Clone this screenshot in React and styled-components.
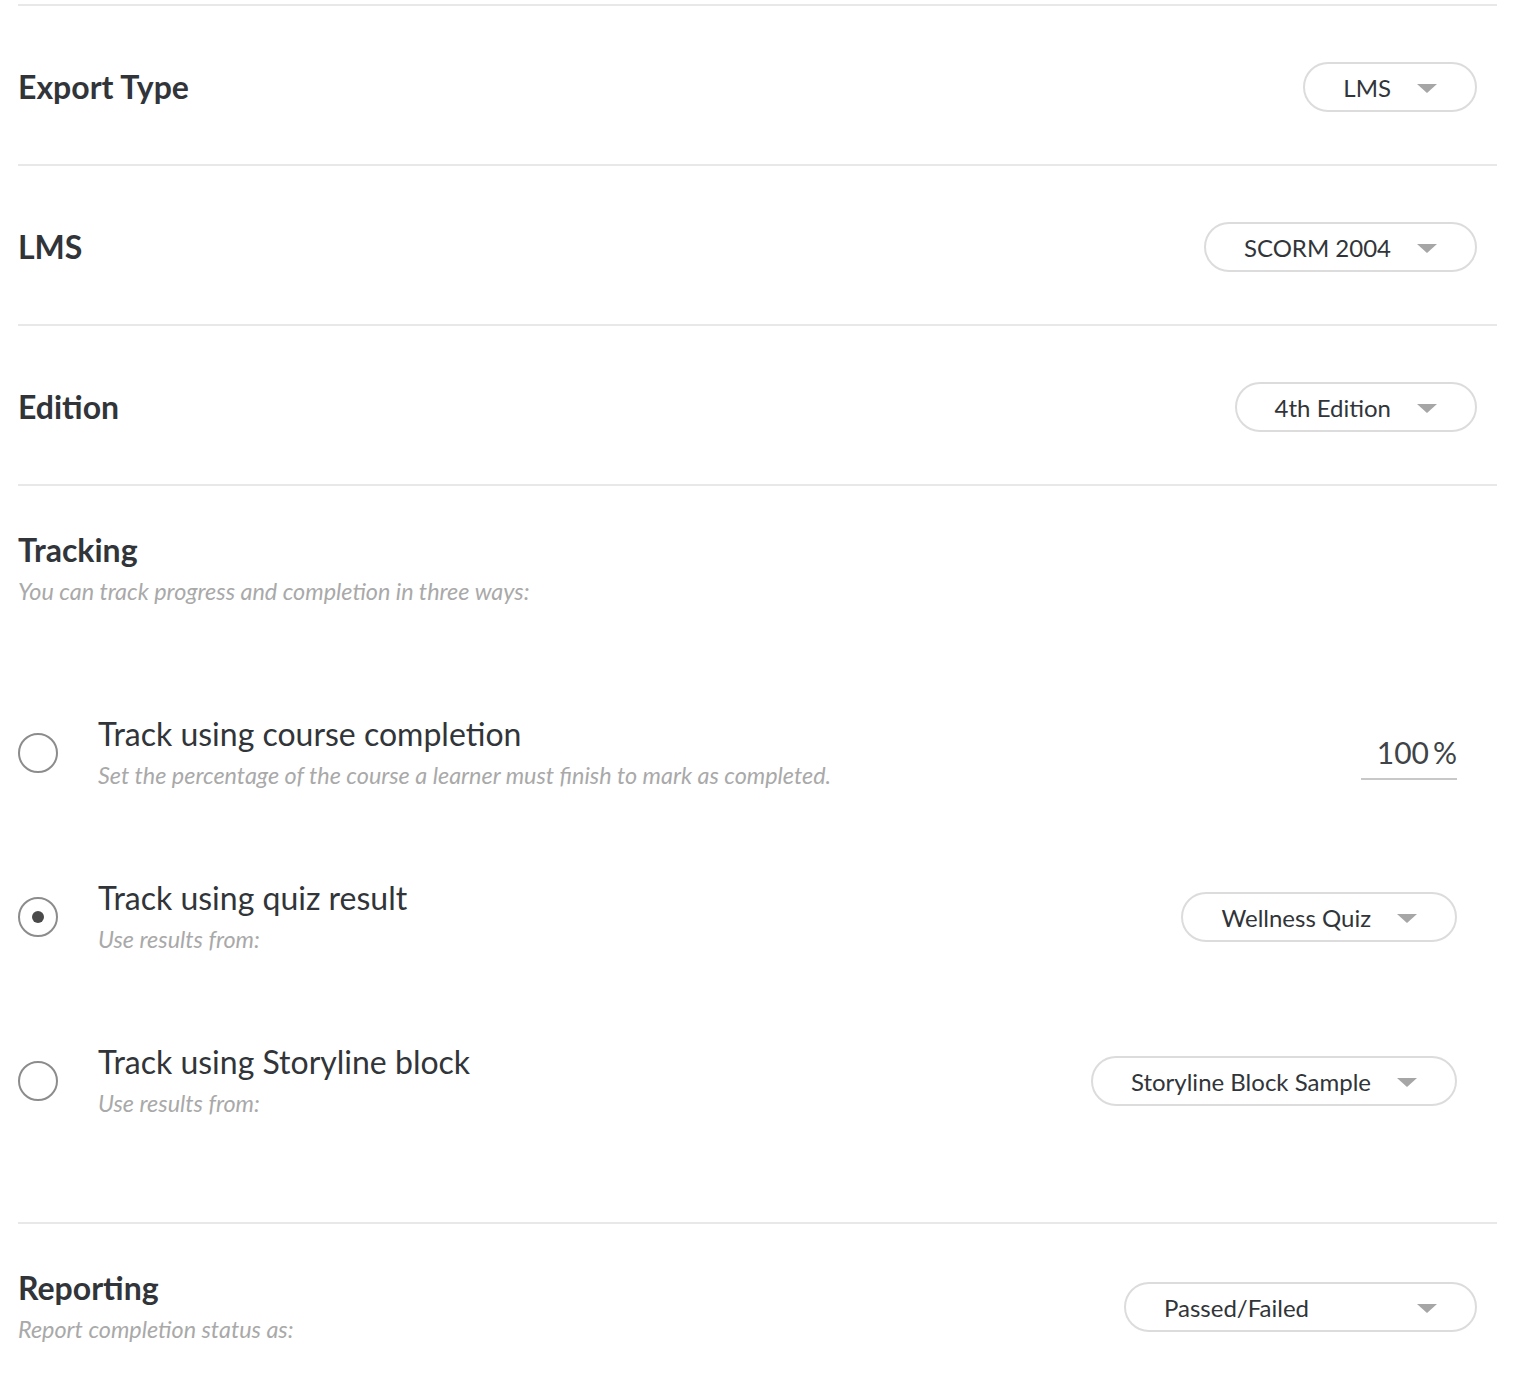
import React from "react";
import styled, { createGlobalStyle } from "styled-components";

const Global = createGlobalStyle`
  html, body { margin: 0; padding: 0; background: #fff; }
  body { font-family: Lato, "Open Sans", sans-serif; color: #313539; }
`;

const Page = styled.div`
  margin: 0 17px 0 18px;
  padding-top: 4px;
`;

const Section = styled.section`
  border-top: 2px solid #e8e8e8;
`;

const Row = styled.div`
  height: ${(p) => p.$h || 158}px;
  padding: ${(p) => p.$pt || 0}px 20px 0 0;
  box-sizing: border-box;
  display: flex;
  align-items: ${(p) => p.$align || "center"};
  justify-content: space-between;
`;

const HeadBlock = styled.div`
  display: flex;
  flex-direction: column;
  padding-top: ${(p) => p.$pt || 0}px;
`;

const Title = styled.h2`
  margin: 0;
  font-size: 32px;
  line-height: 36px;
  font-weight: 700;
  color: #313539;
`;

const Hint = styled.p`
  margin: ${(p) => p.$mt || 0}px 0 0;
  font-size: 23.4px;
  line-height: 28px;
  font-style: italic;
  font-weight: 400;
  color: #a9a9a9;
`;

const Pill = styled.button`
  height: 50px;
  min-width: ${(p) => p.$min || 0}px;
  box-sizing: border-box;
  border: 2px solid #dcdcdc;
  border-radius: 25px;
  background: #fff;
  padding: 0 38px 0 38px;
  display: flex;
  align-items: center;
  justify-content: space-between;
  gap: 26px;
  font-family: Lato, sans-serif;
  font-size: 24px;
  color: #313539;
  cursor: pointer;
  margin-top: ${(p) => p.$mt || 0}px;
`;

const Caret = styled.span`
  width: 0;
  height: 0;
  border-left: 10px solid transparent;
  border-right: 10px solid transparent;
  border-top: 9px solid #a6a6a6;
  margin-top: 2px;
`;

const Options = styled.div`
  display: flex;
  flex-direction: column;
  padding: 107px 40px 100px 0;
  gap: 82px;
`;

const Option = styled.div`
  display: flex;
  align-items: center;
  justify-content: space-between;
  height: 82px;
`;

const OptionLeft = styled.div`
  display: flex;
  align-items: center;
  gap: 40px;
`;

const Radio = styled.span`
  width: 40px;
  height: 40px;
  box-sizing: border-box;
  border-radius: 50%;
  border: 2px solid #8c8c8c;
  display: flex;
  align-items: center;
  justify-content: center;
  flex-shrink: 0;
  &::after {
    content: "";
    width: 12px;
    height: 12px;
    border-radius: 50%;
    background: ${(p) => (p.$on ? "#4a4a4a" : "transparent")};
  }
`;

const OptionText = styled.div`
  display: flex;
  flex-direction: column;
  gap: 7px;
  margin-bottom: 4px;
`;

const OptionTitle = styled.div`
  font-size: 32px;
  line-height: 40px;
  font-weight: 400;
  color: #313539;
`;

const Percent = styled.div`
  width: 96px;
  box-sizing: border-box;
  border-bottom: 2px solid #c8c8c8;
  text-align: right;
  font-size: 30px;
  line-height: 44px;
  color: #3f4448;
  padding-bottom: 4px;
  margin-top: 4px;
  span { margin-left: 4px; }
`;

function Select({ label, min, mt }) {
  return (
    <Pill $min={min} $mt={mt}>
      <span>{label}</span>
      <Caret />
    </Pill>
  );
}

export default function App() {
  return (
    <>
      <Global />
      <Page>
        <Section>
          <Row $pt={4}>
            <Title>Export Type</Title>
            <Select label="LMS" />
          </Row>
        </Section>
        <Section>
          <Row $pt={4}>
            <Title>LMS</Title>
            <Select label="SCORM 2004" />
          </Row>
        </Section>
        <Section>
          <Row $pt={4}>
            <Title>Edition</Title>
            <Select label="4th Edition" />
          </Row>
        </Section>
        <Section>
          <HeadBlock $pt={46}>
            <Title>Tracking</Title>
            <Hint $mt={9}>You can track progress and completion in three ways:</Hint>
          </HeadBlock>
          <Options>
            <Option>
              <OptionLeft>
                <Radio />
                <OptionText>
                  <OptionTitle>Track using course completion</OptionTitle>
                  <Hint>Set the percentage of the course a learner must finish to mark as completed.</Hint>
                </OptionText>
              </OptionLeft>
              <Percent>100<span>%</span></Percent>
            </Option>
            <Option>
              <OptionLeft>
                <Radio $on />
                <OptionText>
                  <OptionTitle>Track using quiz result</OptionTitle>
                  <Hint>Use results from:</Hint>
                </OptionText>
              </OptionLeft>
              <Select label="Wellness Quiz" />
            </Option>
            <Option>
              <OptionLeft>
                <Radio />
                <OptionText>
                  <OptionTitle>Track using Storyline block</OptionTitle>
                  <Hint>Use results from:</Hint>
                </OptionText>
              </OptionLeft>
              <Select label="Storyline Block Sample" />
            </Option>
          </Options>
        </Section>
        <Section>
          <Row $h={154} $align="flex-start">
            <HeadBlock $pt={46}>
              <Title>Reporting</Title>
              <Hint $mt={9}>Report completion status as:</Hint>
            </HeadBlock>
            <Select label="Passed/Failed" min={353} mt={58} />
          </Row>
        </Section>
      </Page>
    </>
  );
}
